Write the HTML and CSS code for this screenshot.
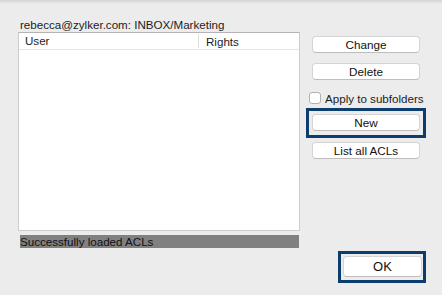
FILE: index.html
```html
<!doctype html>
<html lang=en>
<head>
<meta charset=utf-8>
<title>ACL</title>
<link rel="stylesheet" href="styles.css">
</head>
<body>

<div class="dialog">

	<div class="main">

		<!-- folder and acl list -->
		<div class="left">
			<div class="folder">rebecca@zylker.com: INBOX/Marketing</div>
			<div class="table">
				<div class="head">
					<span class="col user">User</span>
					<span class="col rights">Rights</span>
				</div>
			</div>
			<div class="status">Successfully loaded ACLs</div>
		</div>

		<!-- actions -->
		<div class="right">
			<button class="btn change">Change</button>
			<button class="btn delete">Delete</button>
			<label class="check"><span class="box"></span>Apply to subfolders</label>
			<button class="btn new marked">New</button>
			<button class="btn list">List all ACLs</button>
		</div>

	</div>

	<div class="footer">
		<button class="btn ok marked">OK</button>
	</div>

</div>

</body>
</html>
```

FILE: styles.css
```css
/* ====  Base  ==== */

* {
	box-sizing: border-box;
}

html, body {
	margin: 0;
	height: 100%;
}

body {
	background:  #ececec;
	font-family: "Liberation Sans", Arial, Helvetica, sans-serif;
	font-size:   11.6px;
	color:       #1c1c1c;
	background-image:  linear-gradient(#d4d4d4, #ececec 4px);
	background-repeat: no-repeat;
}

.dialog {
	padding: 16px 0 0 18px;
}

.main {
	display: flex;
}

/* ====  Left column  ==== */

.left {
	width: 282px;
}

.folder {
	height:       16px;
	line-height:  18px;
	padding-left: 2px;
}

.table {
	height:     199px;
	background: white;
	border:     1px solid #cdcdcd;
	border-top-color: #b4b4b4;
}

.head {
	display:       flex;
	height:        17px;
	align-items:   center;
	border-bottom: 1px solid #e6e6e6;
}

.col {
	line-height: 16px;
}

.user {
	width:        179px;
	padding-left: 6px;
}

.rights {
	padding-left:   7px;
	border-left:    1px solid #dedede;
	line-height:    11px;
	padding-top:    2px;
	padding-bottom: 1px;
}

.status {
	margin:      4px 0 0 2px;
	width:       279px;
	height:      13px;
	line-height: 14px;
	background:  #808080;
	color:       #111;
}

/* ====  Right column  ==== */

.right {
	display:        flex;
	flex-direction: column;
	align-items:    flex-start;
	width:          108px;
	margin-left:    12px;
	padding-top:    20px;
}

.btn {
	position:      relative;
	width:         108px;
	height:        17px;
	padding:       0;
	font-family:   inherit;
	font-size:     11.7px;
	color:         #111;
	background:    white;
	border:        1px solid #d4d4d4;
	border-bottom-color: #bdbdbd;
	border-radius: 4px;
	line-height:   15px;
}

.delete { margin-top: 10px; }
.new    { margin-top: 10px; }
.list   { margin-top: 11px; }

.check {
	display:     flex;
	align-items: center;
	margin:      12px 0 0 -3px;
	height:      12px;
	white-space: nowrap;
}

.box {
	width:         12px;
	height:        12px;
	margin-right:  4px;
	background:    white;
	border:        1px solid #b0b0b0;
	border-radius: 3px;
}

/* highlight frame drawn over the button */
.marked::after {
	content:  "";
	position: absolute;
	inset:    -7px -7px -8px -7px;
	border:   3px solid #0b3e6f;
}

/* ====  Footer  ==== */

.footer {
	display:         flex;
	justify-content: flex-end;
	padding-right:   20px;
	margin-top:      8px;
}

.ok {
	width:     79px;
	height:    21px;
	font-size: 13px;
	line-height: 19px;
}

.ok::after {
	inset: -6px -5px -7px -6px;
}
```
